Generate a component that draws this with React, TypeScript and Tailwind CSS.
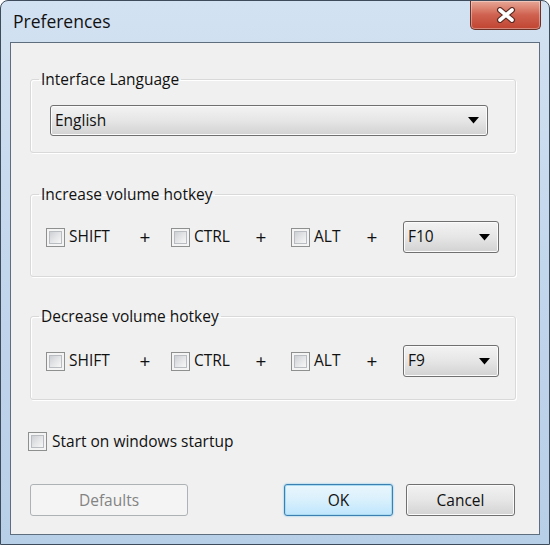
import React from "react";

const font = { fontFamily: '"Open Sans", "Noto Sans", "Liberation Sans", sans-serif' };

function Check() {
  return (
    <div className="w-[19px] h-[19px] shrink-0 border border-[#8e8f8f] bg-[#f4f4f4] p-[2px]">
      <div className="w-full h-full border border-[#b9bcc0] bg-gradient-to-br from-[#cdd0d4] via-[#e4e5e7] to-[#f7f7f7]" />
    </div>
  );
}

function Arrow() {
  return (
    <svg width="11" height="7" viewBox="0 0 11 7" className="shrink-0">
      <polygon points="0,0 11,0 5.5,6.5" fill="#000" />
    </svg>
  );
}

function Combo({ value, w, h, pl }: { value: string; w: string; h: string; pl: string }) {
  return (
    <div
      className={`${w} ${h} rounded-[3px] border border-[#707070] shadow-[inset_0_0_0_1px_#fbfbfb] bg-gradient-to-b from-[#f3f3f3] via-[#e6e6e6] to-[#d2d2d2] flex items-center ${pl} pr-[8px] justify-between shrink-0`}
    >
      <span className="text-[15.5px] text-[#111]">{value}</span>
      <Arrow />
    </div>
  );
}

function HotkeyRow({ value }: { value: string }) {
  return (
    <div className="flex items-center pl-[15px] text-[15.5px] text-[#111]">
      <div className="w-[84px] flex items-center gap-[4px]">
        <Check />
        <span>SHIFT</span>
      </div>
      <span className="w-[30px] text-center text-[19px]">+</span>
      <div className="ml-[11px] w-[75px] flex items-center gap-[4px]">
        <Check />
        <span>CTRL</span>
      </div>
      <span className="w-[30px] text-center text-[19px]">+</span>
      <div className="ml-[15px] w-[66px] flex items-center gap-[4px]">
        <Check />
        <span>ALT</span>
      </div>
      <span className="w-[30px] text-center text-[19px]">+</span>
      <div className="ml-[16px]">
        <Combo value={value} w="w-[96px]" h="h-[32px]" pl="pl-[4px]" />
      </div>
    </div>
  );
}

export default function App() {
  return (
    <div className="w-[550px] h-[545px] bg-white" style={font}>
      <div className="w-[550px] h-[545px] rounded-t-[8px] border border-[#3d4b5a] bg-gradient-to-b from-[#d3e2f2] via-[#c2d6ec] to-[#b8cfe8] flex flex-col">
        <div className="h-[41px] flex items-start justify-between shrink-0">
          <span className="ml-[12px] mt-[9px] text-[17.5px] leading-[22px] text-[#111]">Preferences</span>
          <div className="mr-[8px] w-[71px] h-[29px] rounded-b-[5px] border border-t-0 border-[#6b3228] bg-gradient-to-b from-[#e7a796] via-[#cf6150] to-[#c04430] shadow-[inset_0_0_0_1px_rgba(255,255,255,0.35)] flex items-center justify-center">
            <svg width="22" height="16" viewBox="0 0 22 16">
              <path d="M5 3 L17 13 M17 3 L5 13" stroke="#5b2a22" strokeWidth="6" strokeLinecap="round" />
              <path d="M5 3 L17 13 M17 3 L5 13" stroke="#ffffff" strokeWidth="3.6" strokeLinecap="round" />
            </svg>
          </div>
        </div>
        <div className="mx-[9px] mb-[9px] flex-1 border border-[#5f6e7e] bg-[#f0f0f0] flex flex-col">
          <fieldset className="ml-[19px] mt-[26px] w-[486px] border border-[#d9d9d9] rounded-[3px] shadow-[inset_1px_1px_0_#fff,1px_1px_0_#fff]">
            <legend className="ml-[8px] px-[2px] text-[15.5px] leading-[20px] text-[#111]">Interface Language</legend>
            <div className="pt-[16px] pb-[16px] pl-[19px]">
              <Combo value="English" w="w-[438px]" h="h-[31px]" pl="pl-[4px]" />
            </div>
          </fieldset>
          <fieldset className="ml-[19px] mt-[31px] w-[486px] border border-[#d9d9d9] rounded-[3px] shadow-[inset_1px_1px_0_#fff,1px_1px_0_#fff]">
            <legend className="ml-[8px] px-[2px] text-[15.5px] leading-[20px] text-[#111]">Increase volume hotkey</legend>
            <div className="pt-[17px] pb-[23px]">
              <HotkeyRow value="F10" />
            </div>
          </fieldset>
          <fieldset className="ml-[19px] mt-[29px] w-[486px] border border-[#d9d9d9] rounded-[3px] shadow-[inset_1px_1px_0_#fff,1px_1px_0_#fff]">
            <legend className="ml-[8px] px-[2px] text-[15.5px] leading-[20px] text-[#111]">Decrease volume hotkey</legend>
            <div className="pt-[19px] pb-[22px]">
              <HotkeyRow value="F9" />
            </div>
          </fieldset>
          <div className="ml-[17px] mt-[30px] flex items-center gap-[5px] text-[15.5px] text-[#111]">
            <Check />
            <span>Start on windows startup</span>
          </div>
          <div className="mt-[31px] flex items-center">
            <button className="ml-[19px] w-[158px] h-[32px] rounded-[3px] border border-[#adb2b5] bg-[#f4f4f4] text-[15.5px] text-[#838383]">
              Defaults
            </button>
            <button className="ml-[96px] w-[109px] h-[32px] rounded-[3px] border border-[#3c7fb1] shadow-[inset_0_0_0_1px_#a9dcf3,0_0_2px_#64bde8] bg-gradient-to-b from-[#eaf6fd] via-[#d9f0fc] to-[#bee6fd] text-[15.5px] text-[#111]">
              OK
            </button>
            <button className="ml-[13px] w-[109px] h-[32px] rounded-[3px] border border-[#707070] shadow-[inset_0_0_0_1px_#fbfbfb] bg-gradient-to-b from-[#f2f2f2] via-[#e6e6e6] to-[#d3d3d3] text-[15.5px] text-[#111]">
              Cancel
            </button>
          </div>
        </div>
      </div>
    </div>
  );
}
